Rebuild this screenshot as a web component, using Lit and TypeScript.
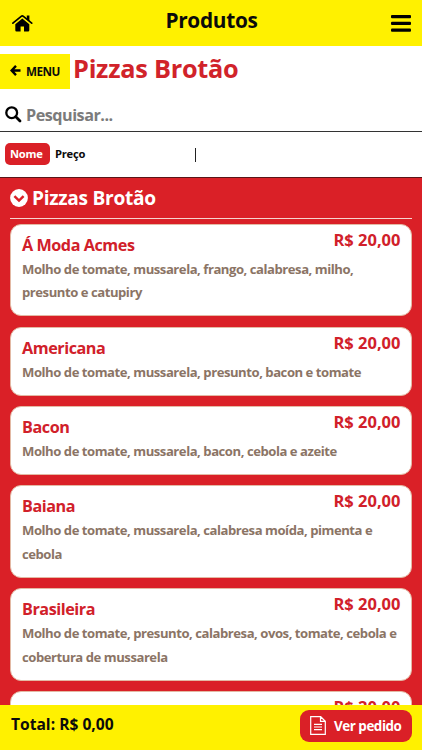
import { LitElement, html, css } from 'lit';
import { customElement, state } from 'lit/decorators.js';

interface Product {
  name: string;
  price: string;
  description: string;
}

@customElement('product-card')
export class ProductCard extends LitElement {
  static properties = { product: { attribute: false } };
  declare product: Product;

  static styles = css`
    :host {
      display: block;
      box-sizing: border-box;
      background: #fff;
      border: 1px solid #e3b9a4;
      border-radius: 11px;
      padding: 6px 10px 10.7px 11px;
    }
    .top {
      display: flex;
      justify-content: space-between;
      align-items: flex-start;
      height: 27px;
      color: #d1202a;
      font-size: 16.2px;
    }
    .name {
      line-height: 28px;
      letter-spacing: -0.45px;
    }
    .price {
      line-height: 18px;
      font-size: 16.5px;
    }
    .description {
      margin: 0;
      color: #8b7465;
      font-size: 13.1px;
      letter-spacing: -0.46px;
      line-height: 23.5px;
    }
  `;

  render() {
    return html`
      <div class="top">
        <span class="name">${this.product.name}</span>
        <span class="price">${this.product.price}</span>
      </div>
      <p class="description">${this.product.description}</p>
    `;
  }
}

@customElement('app-root')
export class AppRoot extends LitElement {
  @state()
  private products: Product[] = [
    { name: 'Á Moda Acmes', price: 'R$ 20,00', description: 'Molho de tomate, mussarela, frango, calabresa, milho, presunto e catupiry' },
    { name: 'Americana', price: 'R$ 20,00', description: 'Molho de tomate, mussarela, presunto, bacon e tomate' },
    { name: 'Bacon', price: 'R$ 20,00', description: 'Molho de tomate, mussarela, bacon, cebola e azeite' },
    { name: 'Baiana', price: 'R$ 20,00', description: 'Molho de tomate, mussarela, calabresa moída, pimenta e cebola' },
    { name: 'Brasileira', price: 'R$ 20,00', description: 'Molho de tomate, presunto, calabresa, ovos, tomate, cebola e cobertura de mussarela' },
    { name: '', price: 'R$ 20,00', description: '' },
  ];

  static styles = css`
    :host {
      display: flex;
      flex-direction: column;
      height: 750px;
      overflow: hidden;
      background: #fff;
      color: #0b0b0b;
      font-family: 'Open Sans', 'Noto Sans', sans-serif;
      font-weight: 700;
    }
    svg {
      display: block;
      flex: none;
    }
    .header {
      display: grid;
      grid-template-columns: 1fr auto 1fr;
      height: 46px;
      flex: none;
      background: #fff100;
      padding: 0 11px 0 12px;
      box-sizing: border-box;
    }
    .header svg {
      margin-top: 14px;
    }
    .header .bars {
      justify-self: end;
    }
    .title {
      font-size: 20.8px;
      letter-spacing: -0.3px;
      line-height: 41px;
    }
    .heading {
      display: flex;
      height: 43px;
      flex: none;
      padding-top: 8px;
      box-sizing: border-box;
    }
    .back {
      display: flex;
      align-items: center;
      gap: 5px;
      width: 70px;
      height: 35px;
      padding: 0 0 2px 10px;
      box-sizing: border-box;
      background: #fff100;
      font-size: 11.7px;
      letter-spacing: -0.5px;
    }
    h1 {
      margin: 0 0 0 3px;
      color: #d1232a;
      font-size: 25.3px;
      letter-spacing: -0.25px;
      line-height: 29px;
    }
    .search {
      display: flex;
      align-items: center;
      gap: 4px;
      height: 43px;
      flex: none;
      padding: 9px 0 0 5px;
      box-sizing: border-box;
      border-bottom: 1px solid #333;
    }
    .search span {
      color: #7b7b7b;
      font-size: 16.2px;
      letter-spacing: -0.5px;
    }
    .sort {
      display: grid;
      grid-template-columns: 195px 1fr;
      height: 46px;
      flex: none;
      padding-top: 11px;
      box-sizing: border-box;
      border-bottom: 1px solid #5a1518;
      font-size: 11.2px;
      letter-spacing: -0.25px;
      line-height: 22px;
    }
    .options {
      display: flex;
      gap: 5px;
      padding-left: 5px;
    }
    .active {
      width: 45px;
      height: 22px;
      box-sizing: border-box;
      padding-left: 5px;
      border-radius: 5px;
      background: #da2027;
      color: #fff;
    }
    .divider {
      width: 1px;
      height: 14px;
      margin-top: 5px;
      background: #222;
    }
    .list {
      flex: 1;
      min-height: 0;
      overflow: hidden;
      background: #da2027;
      padding: 0 10.5px 0 10px;
    }
    .section {
      display: flex;
      align-items: center;
      gap: 4px;
      height: 41px;
      box-sizing: border-box;
      border-bottom: 1px solid #f6d4cf;
      margin-bottom: 4.8px;
      color: #fff;
      font-size: 19.1px;
      letter-spacing: -0.28px;
    }
    product-card {
      margin-bottom: 10.2px;
    }
    .footer {
      display: flex;
      justify-content: space-between;
      height: 45px;
      flex: none;
      background: #fff100;
      padding: 5px 10.5px 0 11px;
      box-sizing: border-box;
    }
    .total {
      font-size: 15.6px;
      line-height: 28px;
    }
    .order {
      display: flex;
      align-items: center;
      gap: 8px;
      width: 111.5px;
      height: 32px;
      padding: 0 0 1px 10px;
      box-sizing: border-box;
      border-radius: 9px;
      background: #da2027;
      color: #fff;
      font-size: 13.4px;
      letter-spacing: -0.45px;
      white-space: nowrap;
    }
  `;

  render() {
    return html`
      <div class="header">
        <svg width="21" height="18" viewBox="0 0 21 18">
          <path d="M3.3 10.2 10.3 4.5 17.3 10.2V16.3Q17.3 17.5 16.1 17.5H12V12.4H8.6V17.5H4.5Q3.3 17.5 3.3 16.3Z" />
          <path d="M.9 9.2 9.2 2.4Q10.3 1.5 11.4 2.4L19.7 9.2" fill="none" stroke="#000" stroke-width="1.7" stroke-linecap="round" />
          <path d="M14.8 1.5H17.4V7.6L14.8 5.5Z" />
        </svg>
        <span class="title">Produtos</span>
        <svg class="bars" width="20" height="19" viewBox="0 0 20 19">
          <rect y="1" width="20" height="3.2" rx="1" />
          <rect y="7.8" width="20" height="3.2" rx="1" />
          <rect y="14.6" width="20" height="3.2" rx="1" />
        </svg>
      </div>

      <div class="heading">
        <div class="back">
          <svg width="11" height="11" viewBox="0 0 11 11" fill="none" stroke="#000" stroke-width="2.4">
            <path d="M6 .9 1.6 5.5 6 10.1M2 5.5H10.5" />
          </svg>
          <span>MENU</span>
        </div>
        <h1>Pizzas Brotão</h1>
      </div>

      <div class="search">
        <svg width="17" height="17" viewBox="0 0 17 17" fill="none" stroke="#000">
          <circle cx="6.7" cy="6.7" r="5.4" stroke-width="2.3" />
          <path d="M10.8 10.8 15 15" stroke-width="2.8" stroke-linecap="round" />
        </svg>
        <span>Pesquisar...</span>
      </div>

      <div class="sort">
        <div class="options">
          <span class="active">Nome</span>
          <span class="option">Preço</span>
        </div>
        <div class="divider"></div>
      </div>

      <div class="list">
        <div class="section">
          <svg width="18" height="18" viewBox="0 0 18 18">
            <circle cx="9" cy="9" r="8.9" fill="#fff" />
            <path d="M4.4 7.2 9 11.6 13.6 7.2" fill="none" stroke="#da2027" stroke-width="2.5" />
          </svg>
          <span>Pizzas Brotão</span>
        </div>
        ${this.products.map(product => html`<product-card .product=${product}></product-card>`)}
      </div>

      <div class="footer">
        <span class="total">Total: R$ 0,00</span>
        <div class="order">
          <svg width="16" height="19" viewBox="0 0 16 19" fill="none" stroke="#fff" stroke-width="1.2">
            <path d="M.7.7H10.7L15.3 5.2V18.3H.7ZM10.5.9V5.4H15.1M4 8.3H12M4 11H12M4 13.7H12" />
          </svg>
          <span>Ver pedido</span>
        </div>
      </div>
    `;
  }
}
